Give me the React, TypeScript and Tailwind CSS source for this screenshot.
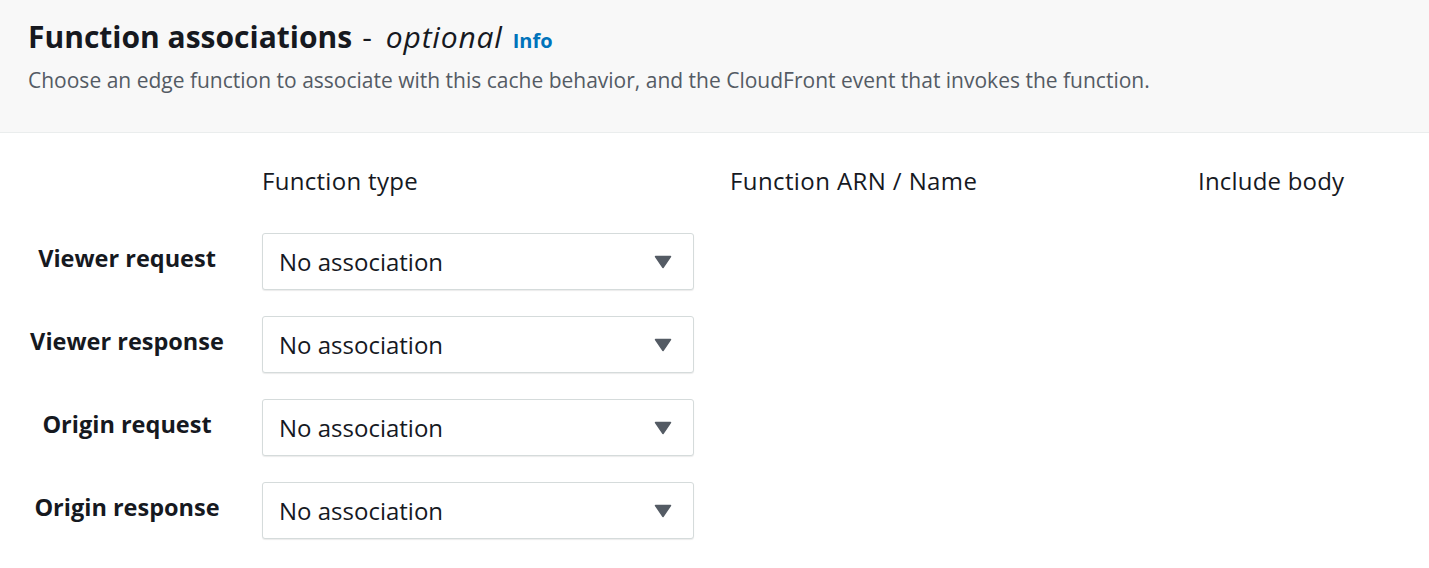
import { useState } from "react";

const events = [
  "Viewer request",
  "Viewer response",
  "Origin request",
  "Origin response",
];

function Dropdown() {
  const [value] = useState("No association");
  return (
    <div className="flex h-[57px] w-[432px] items-center justify-between rounded-[3px] border border-[#d5dbdb] bg-white pl-4 pr-[21px] shadow-[0_1px_1px_rgba(0,0,0,0.08)]">
      <span className="text-[24px] text-[#16191f]">{value}</span>
      <svg width="18" height="14" viewBox="0 0 18 14">
        <path d="M1.5 1.5h15l-7.5 11z" fill="#545b64" stroke="#545b64" strokeWidth="1.5" strokeLinejoin="round" />
      </svg>
    </div>
  );
}

function App() {
  return (
    <div className="min-h-[568px] w-[1429px] bg-white font-['Open_Sans',sans-serif] text-[#16191f]">
      {/* Header */}
      <div className="h-[133px] border-b border-[#eaeded] bg-[#f8f8f8] px-7 pt-[17px]">
        <h2 className="flex items-baseline text-[30px] leading-[40px]">
          <span className="font-bold">Function associations</span>
          <span className="ml-[10px]">-</span>
          <span className="ml-[14px] italic tracking-[0.8px]">optional</span>
          <span className="ml-[10px] text-[20px] font-bold text-[#0073bb]">Info</span>
        </h2>
        <p className="mt-[4px] text-[21px] leading-[30px] text-[#545b64]">
          Choose an edge function to associate with this cache behavior, and the CloudFront event that invokes the function.
        </p>
      </div>

      {/* Table */}
      <div className="grid grid-cols-[198px_432px_432px_1fr] items-center gap-x-9 gap-y-[26px] px-7 pt-[33px]">
        <div />
        <div className="mb-[11px] text-[24px] leading-[30px] tracking-[0.3px]">Function type</div>
        <div className="mb-[11px] text-[24px] leading-[30px] tracking-[0.4px]">Function ARN / Name</div>
        <div className="mb-[11px] text-[24px] leading-[30px] tracking-[0.2px]">Include body</div>
        {events.map((ev) => (
          <>
            <div key={ev} className="pb-[6px] text-center text-[23.5px] font-bold">
              {ev}
            </div>
            <Dropdown />
            <div />
            <div />
          </>
        ))}
      </div>
    </div>
  );
}

export default App;
